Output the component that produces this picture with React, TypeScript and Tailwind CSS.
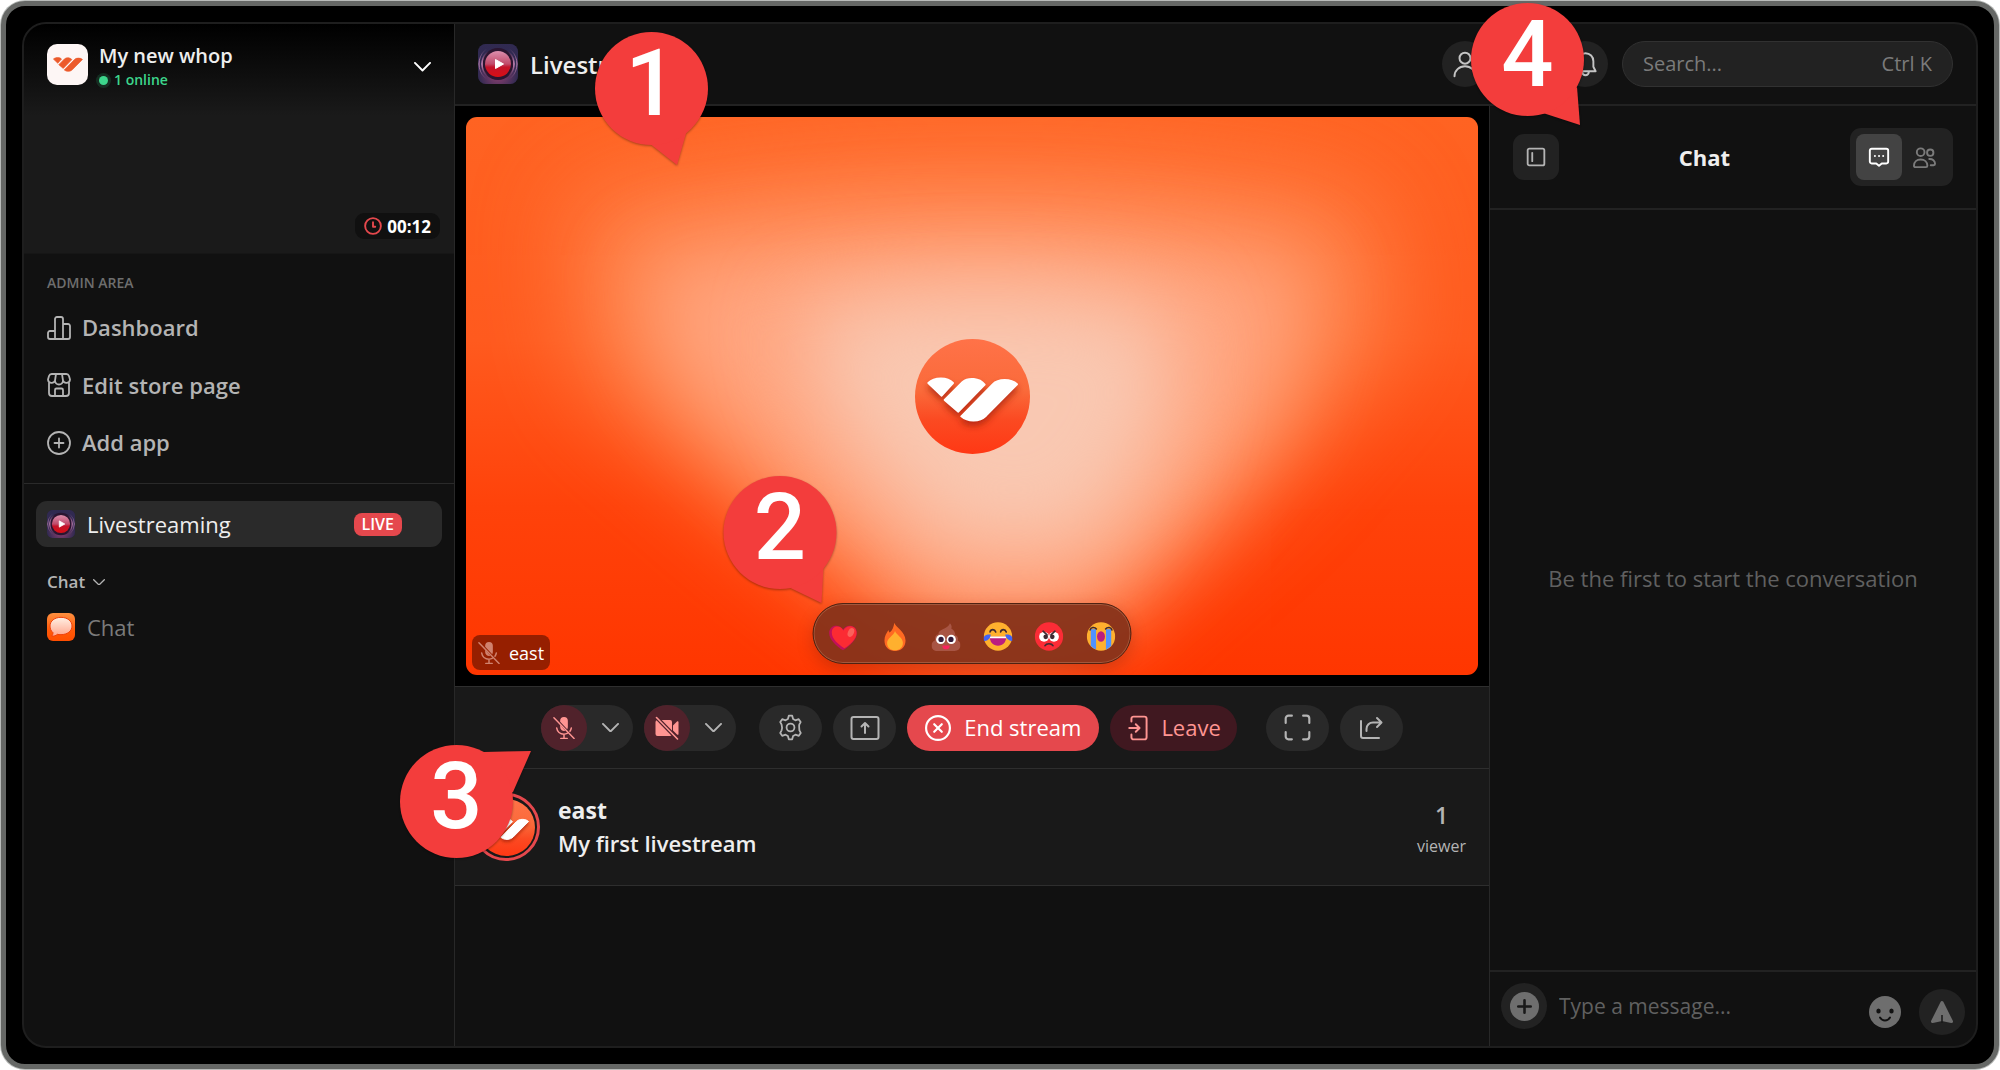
import type { ReactNode } from "react";

type IconProps = {
  children: ReactNode;
  className?: string;
  strokeWidth?: number;
};

function Icon({ children, className = "size-6", strokeWidth = 2 }: IconProps) {
  return (
    <svg
      viewBox="0 0 24 24"
      fill="none"
      stroke="currentColor"
      strokeWidth={strokeWidth}
      strokeLinecap="round"
      strokeLinejoin="round"
      className={`shrink-0 ${className}`}
      aria-hidden="true"
    >
      {children}
    </svg>
  );
}

function ChevronDown({ className }: { className: string }) {
  return (
    <svg viewBox="0 0 18 10" fill="none" stroke="currentColor" strokeWidth={2} className={className} aria-hidden="true">
      <path d="m1 1 8 8 8-8" strokeLinecap="round" strokeLinejoin="round" />
    </svg>
  );
}

function WhopMark() {
  return (
    <g strokeLinejoin="round" strokeWidth={6}>
      <path d="M142 187C160 170 198 168 216 187L182 225Z" />
      <path d="M191 238 245 184C262 170 295 172 311 192L232 273Z" />
      <path d="M241 287 335 191C352 174 390 174 408 191L315 285C295 304 261 304 241 287Z" />
    </g>
  );
}

function WhopAvatar({ id, className }: { id: string; className: string }) {
  return (
    <svg viewBox="102 55 345 345" className={className} role="img" aria-label="Whop">
      <defs>
        <linearGradient id={`${id}-bg`} x1="0" y1="0" x2="0" y2="1">
          <stop offset="0" stopColor="#ff7248" />
          <stop offset="0.45" stopColor="#fa6a3a" />
          <stop offset="0.7" stopColor="#fb4a22" />
          <stop offset="1" stopColor="#ff3814" />
        </linearGradient>
        <filter id={`${id}-blur`} x="-20%" y="-30%" width="140%" height="170%">
          <feGaussianBlur stdDeviation="10" />
        </filter>
      </defs>
      <circle cx="274.500" cy="227.500" r="172.500" fill={`url(#${id}-bg)`} />
      <g transform="translate(0 14)" fill="#a82408" stroke="#a82408" opacity="0.75" filter={`url(#${id}-blur)`}>
        <WhopMark />
      </g>
      <g fill="#fff" stroke="#fff">
        <WhopMark />
      </g>
    </svg>
  );
}

function LivestreamIcon({ id, className }: { id: string; className: string }) {
  return (
    <svg viewBox="0 0 40 40" className={`shrink-0 ${className}`} aria-hidden="true">
      <defs>
        <linearGradient id={`${id}-ball`} x1="0" y1="0" x2="0" y2="1">
          <stop offset="0" stopColor="#dc8fae" />
          <stop offset="0.5" stopColor="#c04a6a" />
          <stop offset="0.62" stopColor="#c4122a" />
          <stop offset="1" stopColor="#d80f14" />
        </linearGradient>
        <radialGradient id={`${id}-glow`} cx="0.5" cy="0.75" r="0.5">
          <stop offset="0" stopColor="#b04a80" />
          <stop offset="1" stopColor="#332c55" />
        </radialGradient>
        <linearGradient id={`${id}-ring`} x1="0" y1="0" x2="0" y2="1">
          <stop offset="0.1" stopColor="#c77bb0" stopOpacity="0" />
          <stop offset="0.5" stopColor="#d48fc0" />
          <stop offset="0.9" stopColor="#c77bb0" stopOpacity="0" />
        </linearGradient>
      </defs>
      <rect width="40" height="40" rx="8" fill="#26203f" />
      <rect width="40" height="40" rx="8" fill={`url(#${id}-glow)`} opacity="0.8" />
      <circle cx="20" cy="20" r="19" fill="none" stroke={`url(#${id}-ring)`} />
      <circle cx="20" cy="20" r="16" fill="#2a1530" stroke={`url(#${id}-ring)`} strokeWidth="1.500" />
      <circle cx="20" cy="20" r="13" fill={`url(#${id}-ball)`} />
      <path d="M17.500 15.500v9l8-4.500z" fill="#fff" stroke="#fff" strokeLinejoin="round" />
    </svg>
  );
}

function ChatBubbleIcon() {
  return (
    <svg viewBox="0 0 84 84" className="size-7 shrink-0" aria-hidden="true">
      <defs>
        <linearGradient id="chat-bg" x1="0" y1="0" x2="0" y2="1">
          <stop offset="0" stopColor="#ff9040" />
          <stop offset="0.6" stopColor="#ff5a08" />
          <stop offset="1" stopColor="#ff4d00" />
        </linearGradient>
        <linearGradient id="chat-bubble" x1="0" y1="0" x2="0" y2="1">
          <stop offset="0" stopColor="#fff0e4" />
          <stop offset="1" stopColor="#ffa58c" />
        </linearGradient>
      </defs>
      <rect width="84" height="84" rx="18" fill="url(#chat-bg)" />
      <path
        d="M42 13c19 0 33 11 33 26S61 65 42 65c-4 0-8 0-11-1-4 4-10 6-17 5 3-3 4-6 4-10C12 54 9 47 9 39c0-15 14-26 33-26Z"
        fill="url(#chat-bubble)"
        stroke="#f0400a"
        strokeWidth="3"
      />
    </svg>
  );
}

function MicOffIcon({ className }: { className: string }) {
  return (
    <svg viewBox="0 0 24 26" fill="none" stroke="currentColor" strokeWidth={1.6} strokeLinecap="round" className={className} aria-hidden="true">
      <path d="M12 1a4.200 4.200 0 0 1 4.200 4.200V12c0 1-.3 1.800-.7 2.500L7.800 6.200V5.200A4.200 4.200 0 0 1 12 1Z" fill="currentColor" stroke="none" />
      <path d="M7.800 9.500v2.600a4.200 4.200 0 0 0 5.500 4" fill="currentColor" stroke="none" />
      <path d="M4 13c.5 4 3.800 6.800 8 6.800 1.300 0 2.500-.3 3.500-.8M20 13a8 8 0 0 1-1.500 3.600M12 20v4M8.500 24.500h7M1 2l22 22.500" />
    </svg>
  );
}

function VideoOffIcon() {
  return (
    <svg viewBox="0 0 24 24" className="size-6" aria-hidden="true">
      <path
        d="M2.500 4H15a2 2 0 0 1 2 2v12a2 2 0 0 1-2 2H2.500a2 2 0 0 1-2-2V6a2 2 0 0 1 2-2ZM18 9.500l4-4c.7-.6 1.500-.3 1.500.6v11.800c0 .9-.8 1.200-1.500.6l-4-4Z"
        fill="currentColor"
      />
      <path d="m1 1 22 22.500" stroke="#50222b" strokeWidth="4" />
      <path d="m1.500 1.500 21 21.500" stroke="currentColor" strokeWidth="1.600" strokeLinecap="round" />
    </svg>
  );
}

const REACTIONS: { label: string; art: ReactNode }[] = [
  {
    label: "Heart",
    art: (
      <>
        <path d="M44 86C24 72 2 54 2 33 2 19 12 11 23 11c9 0 16 5 21 12 5-7 12-12 21-12 12 0 21 9 21 22 0 21-22 39-42 53Z" fill="#c1105a" />
        <path d="M48 80C30 68 10 52 10 32 10 20 18 14 27 14c8 0 14 5 18 12 4-8 12-13 20-13 12 0 20 8 20 20 0 19-19 35-37 47Z" fill="#fb2b33" />
        <ellipse cx="68" cy="32" rx="9" ry="14" transform="rotate(24 68 32)" fill="#f9625b" />
      </>
    ),
  },
  {
    label: "Fire",
    art: (
      <>
        <path d="M42 2c2 12 34 26 34 54 0 20-14 32-32 32S12 76 12 56c0-14 6-22 12-32 1 4 2 6 4 8C36 26 40 14 42 2Z" fill="#ff6a22" />
        <path d="M44 27c4 12 24 20 24 36 0 14-10 23-24 23S20 77 20 63c0-14 20-22 24-36Z" fill="#ffb02e" />
      </>
    ),
  },
  {
    label: "Poop",
    art: (
      <>
        <path d="M56 4c6 6 6 12 4 16 8 4 12 12 12 20 8 2 10 10 8 16 6 4 8 8 8 14 0 12-8 18-18 18H18C8 88 0 82 0 71c0-8 5-14 11-16-2-10 3-17 10-18-1-16 29-14 35-33Z" fill="#a85544" />
        <circle cx="28" cy="53" r="14" fill="#fff" />
        <circle cx="60" cy="53" r="14" fill="#fff" />
        <circle cx="29" cy="53" r="8" fill="#321b3a" />
        <circle cx="59" cy="53" r="8" fill="#321b3a" />
        <path d="M33 71h22c1 8-6 12-11 12s-12-4-11-12Z" fill="#f9255f" />
      </>
    ),
  },
  {
    label: "Tears of joy",
    art: (
      <>
        <circle cx="44" cy="44" r="43" fill="#ffb02e" />
        <path d="M20 30c2-9 14-9 17 0M52 30c2-9 14-9 17 0" fill="none" stroke="#402a32" strokeWidth="5" strokeLinecap="round" />
        <path d="M19 45h50c0 16-10 27-25 27S19 61 19 45Z" fill="#bb1d80" />
        <path d="M19 44h50v5H19z" fill="#fff" />
        <path d="M0 50c0-9 10-14 22-12 0 10-9 19-18 20-3 0-4-4-4-8ZM88 50c0-9-10-14-22-12 0 10 12 19 20 20 3-1 2-4 2-8Z" fill="#4264f4" />
      </>
    ),
  },
  {
    label: "Angry",
    art: (
      <>
        <circle cx="44" cy="44" r="43" fill="#fb2c36" />
        <circle cx="29" cy="45" r="15" fill="#fff" />
        <circle cx="59" cy="45" r="15" fill="#fff" />
        <circle cx="34" cy="45" r="7" fill="#402a32" />
        <circle cx="54" cy="45" r="7" fill="#402a32" />
        <path d="m26 28 12 11M62 28 50 39M32 72c4-8 20-8 24 0" fill="none" stroke="#402a32" strokeWidth="5" strokeLinecap="round" />
      </>
    ),
  },
  {
    label: "Crying",
    art: (
      <>
        <circle cx="44" cy="44" r="43" fill="#ffb02e" />
        <path d="M13 22h16v61c-6-2-11-6-16-11ZM59 22h16v51c-5 5-10 8-16 11Z" fill="#5092ff" />
        <path d="M11 24c2-8 13-10 19-3M77 24c-2-8-13-10-19-3" fill="none" stroke="#402a32" strokeWidth="5" strokeLinecap="round" />
        <ellipse cx="44" cy="44" rx="12" ry="16" fill="#bb1d80" />
      </>
    ),
  },
];

type CalloutProps = {
  value: number;
  tail: string;
  className: string;
};

// The circle is 113px wide; the tail is drawn in the same coordinates and may leave the box.
function Callout({ value, tail, className }: CalloutProps) {
  return (
    <div className={`pointer-events-none absolute z-20 size-[113px] ${className}`}>
      <svg viewBox="0 0 113 113" className="absolute inset-0 size-full overflow-visible drop-shadow-[0_1px_1px_rgba(0,0,0,0.35)]" aria-hidden="true">
        <path d={tail} fill="#f33d3c" />
        <circle cx="56.500" cy="56.500" r="56.500" fill="#f33d3c" />
      </svg>
      <span className="relative flex h-[104px] items-center justify-center font-[Roboto,sans-serif] text-[92px] leading-none font-medium text-white">
        {value}
      </span>
    </div>
  );
}

function Sidebar() {
  return (
    <nav className="w-[431px] shrink-0 rounded-l-[22px] border-r border-[#282828]">
      <div className="flex h-[230px] flex-col justify-between rounded-tl-[22px] border-b border-[#161616] bg-linear-to-b/srgb from-black to-[#1a1a1a] to-40% pt-[18px] pb-[14px]">
        <div className="flex items-start px-[23px]">
          <span className="mt-[2px] flex size-[41px] items-center justify-center rounded-[10px] bg-[#fdf6f5]">
            <svg viewBox="138 168 275 137" className="w-[30px]" fill="#ec5a2b" stroke="#ec5a2b" role="img" aria-label="Whop">
              <WhopMark />
            </svg>
          </span>
          <div className="ml-[11px] flex-1 pt-px">
            <p className="text-[20px] leading-[25px] font-semibold text-[#eeeeee]">My new whop</p>
            <p className="flex items-center text-[14px] leading-6 font-semibold text-[#3dd68c]">
              <span className="mr-[6px] size-[9px] rounded-full bg-[#3dd68c] ring-[3px] ring-[#3dd68c]/15" />1 online
            </p>
          </div>
          <button type="button" aria-label="Switch whop" className="self-center text-white">
            <ChevronDown className="w-[17px]" />
          </button>
        </div>
        <div className="mr-[14px] flex h-[26px] items-center gap-[5px] self-end rounded-[9px] bg-[#101010] px-[9px] text-white">
          <Icon className="size-[18px] text-[#e5484d]" strokeWidth={2.5}>
            <circle cx="12" cy="12" r="10.500" />
            <path d="M12 7v6h3" />
          </Icon>
          <span className="text-[17px] leading-none font-bold">00:12</span>
        </div>
      </div>

      <p className="pt-[19px] pl-[23px] text-[14px] leading-5 font-semibold text-[#6e6e6e]">ADMIN AREA</p>
      <ul className="mt-[6px] text-[22px] font-semibold text-[#b4b4b4]">
        <li>
          <a href="#dashboard" className="flex h-[57px] items-center gap-[11px] pl-[23px]">
            <Icon className="size-6" strokeWidth={1.8}>
              <path d="M8 23V3a2 2 0 0 1 2-2h4a2 2 0 0 1 2 2v20M8 15H3a2 2 0 0 0-2 2v4a2 2 0 0 0 2 2h18a2 2 0 0 0 2-2V10a2 2 0 0 0-2-2h-5" />
            </Icon>
            Dashboard
          </a>
        </li>
        <li>
          <a href="#store" className="flex h-[58px] items-center gap-[11px] pl-[23px]">
            <Icon className="size-6" strokeWidth={1.8}>
              <path d="M2 10v10a3 3 0 0 0 3 3h14a3 3 0 0 0 3-3V10M8 23v-6a1.500 1.500 0 0 1 1.500-1.500h5A1.500 1.500 0 0 1 16 17v6M5 1h14a3 3 0 0 1 3 2l1 3.500a3.600 3.600 0 0 1-7 1 4 4 0 0 1-8 0 3.600 3.600 0 0 1-7-1L2 3a3 3 0 0 1 3-2ZM9 1 8 7.500M15 1l1 6.500" />
            </Icon>
            Edit store page
          </a>
        </li>
        <li>
          <a href="#add" className="flex h-[57px] items-center gap-[11px] pl-[23px]">
            <Icon className="size-6" strokeWidth={1.8}>
              <circle cx="12" cy="12" r="11" />
              <path d="M12 7.500v9M7.500 12h9" />
            </Icon>
            Add app
          </a>
        </li>
      </ul>

      <div className="mt-3 border-t border-[#2a2a2a] px-3 pt-[17px]">
        <a href="#livestreaming" className="flex h-[46px] items-center rounded-[11px] bg-[#2a2a2a] pr-10 pl-[11px] text-[22px] text-[#eeeeee]">
          <LivestreamIcon id="nav" className="size-7" />
          <span className="ml-3 flex-1">Livestreaming</span>
          <span className="flex h-[23px] items-center rounded-[8px] bg-[#e5484d] px-2 text-[16px] leading-none font-semibold text-white">LIVE</span>
        </a>
        <button type="button" className="mt-[23px] ml-[11px] flex items-center gap-2 text-[17px] leading-6 font-semibold text-[#b4b4b4]">
          Chat
          <ChevronDown className="w-3" />
        </button>
        <a href="#chat" className="mt-[10px] ml-[11px] flex h-[46px] items-center gap-3 text-[22px] text-[#7b7b7b]">
          <ChatBubbleIcon />
          Chat
        </a>
      </div>
    </nav>
  );
}

function RoundButton({ label, children }: { label: string; children: ReactNode }) {
  return (
    <button type="button" aria-label={label} className="flex size-[46px] items-center justify-center rounded-full bg-[#222222] text-[#c4c4c4]">
      {children}
    </button>
  );
}

function Header() {
  return (
    <header className="relative flex h-[82px] shrink-0 items-center border-b-2 border-[#222222] px-[23px]">
      <LivestreamIcon id="header" className="size-10" />
      <h1 className="ml-3 flex-1 pt-[2px] text-[24px] font-semibold text-[#eeeeee]">Livestreaming</h1>
      <Callout value={1} tail="M54 111 82 133 92 98Z" className="top-[8px] left-[140px]" />
      <div className="relative flex items-center gap-[14px]">
        <RoundButton label="Profile">
          <Icon className="size-7" strokeWidth={1.7}>
            <circle cx="12" cy="7" r="4.700" />
            <path d="M3 22.500c0-5 4-8.500 9-8.500s9 3.500 9 8.500" />
          </Icon>
        </RoundButton>
        <RoundButton label="Messages">
          <Icon strokeWidth={1.7}>
            <path d="M4 4h16v13h-5l-3 3-3-3H4Z" />
          </Icon>
        </RoundButton>
        <RoundButton label="Notifications">
          <Icon className="size-[27px]" strokeWidth={1.7}>
            <path d="M12 2c-4 0-7 3-7 7v5l-2 4h18l-2-4V9c0-4-3-7-7-7ZM9 18.500a3 3 0 0 0 6 0" />
          </Icon>
        </RoundButton>
        <label className="flex h-[46px] w-[331px] items-center rounded-full border border-[#313131] bg-[#222222] px-5 text-[20px] text-[#7b7b7b]">
          <input type="search" aria-label="Search" placeholder="Search..." className="w-full min-w-0 bg-transparent outline-none placeholder:text-[#7b7b7b]" />
          <kbd className="shrink-0 font-['Open_Sans','Noto_Sans',sans-serif] text-[20px]">Ctrl K</kbd>
        </label>
        <Callout value={4} tail="M72 110 109 122 106 84Z" className="top-[-38px] left-[29px]" />
      </div>
    </header>
  );
}

function VideoBackdrop() {
  return (
    <svg viewBox="0 0 1012 558" preserveAspectRatio="none" className="absolute inset-0 size-full rounded-[11px]" aria-hidden="true">
      <defs>
        <linearGradient id="stage-base" x1="0" y1="0" x2="0" y2="1">
          <stop offset="0" stopColor="#ff6322" />
          <stop offset="0.4" stopColor="#ff5a1e" />
          <stop offset="0.7" stopColor="#ff420a" />
          <stop offset="1" stopColor="#ff3600" />
        </linearGradient>
        <filter id="wide-blur" x="-50%" y="-50%" width="200%" height="200%" colorInterpolationFilters="sRGB">
          <feGaussianBlur stdDeviation="48" />
        </filter>
        <filter id="core-blur" x="-50%" y="-50%" width="200%" height="200%" colorInterpolationFilters="sRGB">
          <feGaussianBlur stdDeviation="42" />
        </filter>
      </defs>
      <rect width="1012" height="558" fill="url(#stage-base)" />
      <path d="M100 80C350 20 700 20 910 80L930 220 800 370 630 520 440 530 280 400 120 260Z" fill="#ff8a52" opacity="0.8" filter="url(#wide-blur)" />
      <path d="M170 150C360 100 660 100 850 150L815 290 710 420 610 510 470 500 340 390 210 270Z" fill="#ffa985" opacity="0.9" filter="url(#core-blur)" />
      <path d="M330 200C430 165 610 165 710 200L700 320 620 430 480 430 370 310Z" fill="#f9c8b2" filter="url(#core-blur)" />
    </svg>
  );
}

function VideoStage() {
  return (
    <div className="bg-black p-[11px]">
      <div className="relative flex aspect-[1012/558] items-center justify-center">
        <VideoBackdrop />
        <WhopAvatar id="stage" className="relative size-[115px]" />
        <div className="absolute bottom-[5px] left-[6px] flex h-[35px] items-center rounded-[8px] bg-[#961f00] px-[6px] text-white">
          <MicOffIcon className="w-[22px] text-[#d0826e]" />
          <span className="ml-[9px] text-[18px] leading-none font-medium">east</span>
        </div>
        <div className="absolute bottom-[11px] left-1/2 flex h-[61px] w-[319px] -translate-x-1/2 items-center justify-between rounded-full border border-[#4f2212] bg-[#87331a]/95 px-[15px] inset-ring inset-ring-[#a4573b] shadow-[0_6px_16px_rgba(120,20,0,0.3)]">
          {REACTIONS.map((reaction) => (
            <button key={reaction.label} type="button" aria-label={reaction.label} className="pt-[5px]">
              <svg viewBox="0 0 88 88" className="size-[29px]" aria-hidden="true">
                {reaction.art}
              </svg>
            </button>
          ))}
          <Callout value={2} tail="M67 112 98 127 100 91Z" className="bottom-[74px] left-[-90px]" />
        </div>
      </div>
    </div>
  );
}

function DeviceToggle({ label, children }: { label: string; children: ReactNode }) {
  return (
    <div className="flex h-[46px] w-[92px] items-center rounded-full bg-[#292929]">
      <button type="button" aria-label={`Turn on ${label}`} className="flex size-[46px] items-center justify-center rounded-full bg-[#50222b] text-[#ff9592]">
        {children}
      </button>
      <button type="button" aria-label={`Choose ${label}`} className="flex flex-1 justify-center text-[#b4b4b4]">
        <ChevronDown className="w-[17px]" />
      </button>
    </div>
  );
}

function ControlButton({ label, children }: { label: string; children: ReactNode }) {
  return (
    <button type="button" aria-label={label} className="flex h-[46px] w-[63px] items-center justify-center rounded-full bg-[#292929] text-[#b4b4b4]">
      {children}
    </button>
  );
}

function Controls() {
  return (
    <div className="relative flex h-[82px] items-center justify-center border-t border-[#2e2e2e] bg-[#191919]">
      <Callout value={3} tail="M84 7 131 6 113 47 80 60Z" className="top-[58px] left-[-55px]" />
      <div className="flex items-center gap-[11px]">
        <DeviceToggle label="microphone">
          <MicOffIcon className="w-[22px]" />
        </DeviceToggle>
        <DeviceToggle label="camera">
          <VideoOffIcon />
        </DeviceToggle>
      </div>
      <div className="mx-[23px] flex items-center gap-[11px]">
        <ControlButton label="Settings">
          <Icon className="size-[27px]" strokeWidth={1.6}>
            <circle cx="12" cy="12" r="3.500" />
            <path d="M10.500 1.500h3l.8 3 2 1.100 3-1 1.700 2.500-1.200 2.400c-.4 1 .1 4 .1 5l1.200 2.300-1.700 2.600-3-1-2.100 1.200-.8 2.900h-3l-.8-2.900-2.100-1.200-3 1-1.700-2.600 1.200-2.300c.3-1 .3-4 0-5L2.900 7.100l1.700-2.500 3 1 2.100-1.100Z" />
          </Icon>
        </ControlButton>
        <ControlButton label="Share screen">
          <svg viewBox="0 0 30 26" fill="none" stroke="currentColor" strokeWidth={2} strokeLinecap="round" strokeLinejoin="round" className="w-[30px]" aria-hidden="true">
            <rect x="1.500" y="2" width="27" height="22" rx="2" />
            <path d="M15 18V8M11.500 11.500 15 8l3.500 3.500" />
          </svg>
        </ControlButton>
        <button type="button" className="flex h-[46px] items-center gap-[13px] rounded-full bg-[#e5484d] px-[18px] text-[22px] text-white">
          <Icon className="size-[26px]" strokeWidth={2}>
            <circle cx="12" cy="12" r="11" />
            <path d="m8.500 8.500 7 7M15.500 8.500l-7 7" />
          </Icon>
          End stream
        </button>
        <button type="button" className="flex h-[46px] items-center gap-[9px] rounded-full bg-[#401820] px-4 text-[22px] text-[#ff9592]">
          <Icon className="size-[26px]" strokeWidth={1.8}>
            <path d="M5 6V3.500A2 2 0 0 1 7 1.500h10a2 2 0 0 1 2 2v17a2 2 0 0 1-2 2H7a2 2 0 0 1-2-2V18M3 12h9M9 8.500l3.500 3.500L9 15.500" />
          </Icon>
          Leave
        </button>
      </div>
      <div className="flex items-center gap-[11px] pl-[6px]">
        <ControlButton label="Full screen">
          <Icon className="size-[27px]" strokeWidth={1.9}>
            <path d="M1.500 8V4a2.500 2.500 0 0 1 2.500-2.500h3M17 1.500h3A2.500 2.500 0 0 1 22.500 4v4M22.500 16v4a2.500 2.500 0 0 1-2.500 2.500h-3M7 22.500H4A2.500 2.500 0 0 1 1.500 20v-4" />
          </Icon>
        </ControlButton>
        <ControlButton label="Share">
          <Icon strokeWidth={2}>
            <path d="M2 5v15a2 2 0 0 0 2 2h16M7.500 15v-2c0-4 3-6.500 6.500-6.500h8M18 2l4.500 4.500L18 11" />
          </Icon>
        </ControlButton>
      </div>
    </div>
  );
}

function StreamInfo() {
  return (
    <div className="flex items-center border-y border-[#2e2e2e] bg-[#191919] px-[17px] py-[24px]">
      <span className="flex size-[68px] items-center justify-center rounded-full border-[3px] border-[#e5484d]">
        <WhopAvatar id="host" className="size-[57px]" />
      </span>
      <div className="ml-[18px] flex-1 text-[22px] leading-[33px] font-semibold text-[#eeeeee]">
        <p className="text-[23px] font-bold">east</p>
        <p>My first livestream</p>
      </div>
      <div className="pt-1 pr-[6px] text-center text-[#b4b4b4]">
        <p className="text-[23px] leading-[33px] font-semibold">1</p>
        <p className="text-[16px] leading-7">viewer</p>
      </div>
    </div>
  );
}

function ChatPanel() {
  return (
    <aside className="flex w-[487px] shrink-0 flex-col border-l border-[#282828]">
      <div className="flex h-[104px] items-center justify-between border-b-2 border-[#222222] px-[23px]">
        <button type="button" aria-label="Collapse chat" className="flex size-[46px] items-center justify-center rounded-[11px] bg-[#222222] text-[#b4b4b4]">
          <Icon className="size-5" strokeWidth={2.2}>
            <rect x="2" y="2" width="20" height="20" rx="2" />
            <path d="M7.500 7v10" />
          </Icon>
        </button>
        <h2 className="text-[22px] font-bold text-[#eeeeee]">Chat</h2>
        <div className="flex rounded-[11px] bg-[#222222] p-[6px]">
          <button type="button" aria-label="Messages" className="flex size-[46px] items-center justify-center rounded-[8px] bg-[#434343] text-white">
            <Icon className="size-[22px]" strokeWidth={2.1}>
              <path d="M4 3h16a2 2 0 0 1 2 2v12a2 2 0 0 1-2 2h-5l-3 2.500L9 19H4a2 2 0 0 1-2-2V5a2 2 0 0 1 2-2ZM7.500 11h.1M12 11h.1M16.500 11h.1" />
            </Icon>
          </button>
          <button type="button" aria-label="Viewers" className="flex h-[46px] w-[45px] items-center justify-center text-[#7b7b7b]">
            <Icon className="size-[23px]" strokeWidth={2}>
              <circle cx="8" cy="6.500" r="4" />
              <circle cx="18" cy="7" r="3.300" />
              <path d="M1 20.500C1 16.500 4 14 8 14s7 2.500 7 6.500c0 1-.6 1.500-1.500 1.500h-11C1.600 22 1 21.500 1 20.500ZM17 13.500c3.500-.2 6 2 6 5 0 1-.5 1.500-1.500 1.500H18.500" />
            </Icon>
          </button>
        </div>
      </div>
      <div className="flex flex-1 items-center justify-center pb-6 text-[22px] text-[#606060]">
        Be the first to start the conversation
      </div>
      <form className="flex h-[76px] items-start border-t-2 border-[#222222] px-[11px] pt-[11px]">
        <button type="button" aria-label="Add attachment" className="flex size-[46px] shrink-0 items-center justify-center rounded-full bg-[#222222]">
          <svg viewBox="0 0 28 28" className="size-[29px]" aria-hidden="true">
            <circle cx="14" cy="14" r="14" fill="#6e6e6e" />
            <path d="M14 8v12M8 14h12" stroke="#191919" strokeWidth="2.500" strokeLinecap="round" />
          </svg>
        </button>
        <input
          type="text"
          aria-label="Message"
          placeholder="Type a message..."
          className="ml-3 h-[46px] min-w-0 flex-1 bg-transparent text-[21px] text-[#eeeeee] outline-none placeholder:text-[#606060]"
        />
        <button type="button" aria-label="Emoji" className="mt-[13px] mr-[18px]">
          <svg viewBox="0 0 32 32" className="size-8" aria-hidden="true">
            <circle cx="16" cy="16" r="16" fill="#6e6e6e" />
            <ellipse cx="9.500" cy="15" rx="2.200" ry="2.500" fill="#111111" />
            <ellipse cx="22.500" cy="15" rx="2.200" ry="2.500" fill="#111111" />
            <path d="M11 21.500c2.500 4 7.500 4 10 0" fill="none" stroke="#111111" strokeWidth="2" strokeLinecap="round" />
          </svg>
        </button>
        <button type="submit" aria-label="Send" className="mt-[6px] flex size-[46px] shrink-0 items-center justify-center rounded-full bg-[#222222]">
          <svg viewBox="0 0 24 24" className="size-6" fill="#6e6e6e" stroke="#6e6e6e" strokeWidth="3" strokeLinejoin="round" aria-hidden="true">
            <path d="M12 2.500 21.500 21.500 12 19.500 2.500 21.500Z" />
            <path d="M12 15v8" stroke="#191919" strokeWidth="1.500" />
          </svg>
        </button>
      </form>
    </aside>
  );
}

export default function App() {
  return (
    <div className="flex min-h-screen bg-white p-px font-['Open_Sans','Noto_Sans',sans-serif]">
      <div className="flex flex-1 rounded-[24px] border-[5px] border-[#666866] bg-black p-4 ring-1 ring-[#b9bcba]">
        <div className="flex min-w-0 flex-1 rounded-[24px] border-2 border-[#1e1e1e] bg-[#111111]">
          <Sidebar />
          <div className="flex min-w-0 flex-1 flex-col">
            <Header />
            <div className="flex flex-1">
              <main className="min-w-0 flex-1">
                <VideoStage />
                <Controls />
                <StreamInfo />
              </main>
              <ChatPanel />
            </div>
          </div>
        </div>
      </div>
    </div>
  );
}
